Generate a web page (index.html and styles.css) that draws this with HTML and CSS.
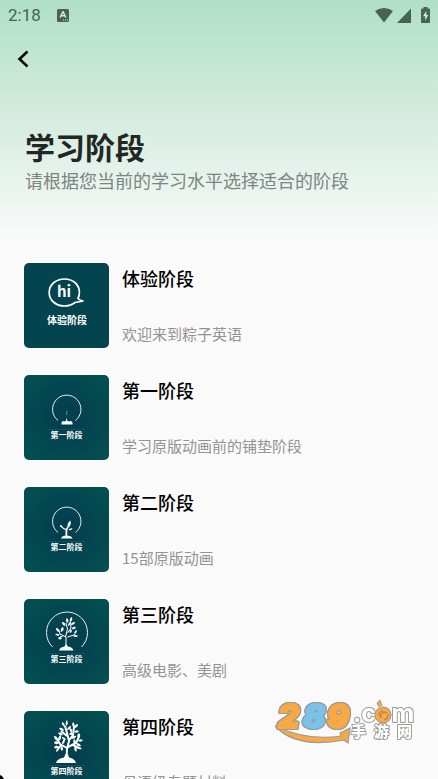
FILE: index.html
```html
<!DOCTYPE html>
<html lang="zh-CN">
<head>
<meta charset="utf-8">
<meta name="viewport" content="width=device-width, initial-scale=1">
<title>学习阶段</title>
<link rel="stylesheet" href="styles.css">
</head>
<body>
<header class="hero">
  <div class="status">
    <span class="time">2:18</span>
    <svg class="app-badge" width="12" height="13" viewBox="0 0 12 13" aria-hidden="true">
      <rect width="12" height="13" rx="1.5" fill="#466354"/>
      <path d="M3.2 8.5 5.7 3h.6l2.5 5.5M4.3 6.8h3.4" fill="none" stroke="#d8eee2" stroke-width="1.4"/>
      <path d="M6 11h1M8 11h1M10 11h1" stroke="#d8eee2"/>
    </svg>
    <span class="signals">
      <svg width="18" height="15" viewBox="0 0 18 15" aria-hidden="true"><path d="M0 3Q9-3 18 3L9 14.500Z" fill="#466354"/></svg>
      <svg width="14" height="15" viewBox="0 0 14 15" aria-hidden="true"><path d="M14 .5V15H0Z" fill="#466354"/></svg>
      <svg class="battery" width="9" height="16" viewBox="0 0 9 16" aria-hidden="true"><path d="M2.500 0h4v1.500H8q1 0 1 1V15q0 1-1 1H1q-1 0-1-1V2.500q0-1 1-1h1.500Z" fill="#466354"/><path d="M5.300 4 2 9.300h2.200V13.500L7.200 8H5.300Z" fill="#d8eee2"/></svg>
    </span>
  </div>
  <nav class="nav">
    <button class="back" type="button" aria-label="返回">
      <svg width="12" height="18" viewBox="0 0 12 18" aria-hidden="true"><path d="M10.500 1.500 2.500 9l8 7.500" fill="none" stroke="#000" stroke-width="2.500"/></svg>
    </button>
  </nav>
  <h1 class="title">学习阶段</h1>
  <p class="subtitle">请根据您当前的学习水平选择适合的阶段</p>
</header>

<main>
  <ul class="stages">
    <li>
      <a class="stage" href="#trial">
        <svg class="thumb thumb-flat" viewBox="0 0 85 85" aria-hidden="true">
          <path d="M54 35.500C55 33.500 55.400 31.500 55.400 29.500 55.400 21.500 49 16 40.500 16S25.200 21.500 25.200 29.500 32 43 40.500 43C44.500 43 48.500 41.500 51 39.500L59.500 38Q55.500 37.500 54 35.500Z" fill="none" stroke="#fff" stroke-width="1.700"/>
          <text class="hi" x="40" y="34">hi</text>
          <text class="cap cap-large" x="43" y="61">体验阶段</text>
        </svg>
        <div class="info"><h2>体验阶段</h2><p>欢迎来到粽子英语</p></div>
      </a>
    </li>
    <li>
      <a class="stage" href="#stage-1">
        <svg class="thumb" viewBox="0 0 85 85" aria-hidden="true">
          <path class="ring" d="M34 45.500A14.200 14.200 0 1 1 51.500 45.500"/>
          <path class="leaf" d="M37.500 49.500V47.500Q38.500 45 40.500 46.500L42.200 45.500 42.500 42.500 43.200 45.500 45 46.500Q47.500 45 48.500 47.500V49.500Z"/>
          <path d="M43.500 35.500Q41.500 37.500 43 40" stroke="#7797a0" stroke-width=".8" fill="none"/>
          <path class="rule" d="M24 54.500H61"/>
          <text class="cap" x="42.500" y="63">第一阶段</text>
        </svg>
        <div class="info"><h2>第一阶段</h2><p>学习原版动画前的铺垫阶段</p></div>
      </a>
    </li>
    <li>
      <a class="stage" href="#stage-2">
        <svg class="thumb" viewBox="0 0 85 85" aria-hidden="true">
          <path class="ring" d="M34 45.500A14.200 14.200 0 1 1 51.500 45.500"/>
          <path class="leaf" d="M37 51.500Q37.500 49 41.500 48.500V43Q39 42.500 37 40 35.500 40 36 38 38.500 38 38.700 40 40 41.500 42 41.700L43.500 39.500Q43.200 35.500 46.500 33.500 47.500 38.500 44.500 40.500L43.300 43V48.500Q48 49 48.500 51.500ZM44.500 43Q46.500 40.500 48.500 41.500 47.500 44 44.500 43Z"/>
          <path class="rule" d="M24 54.500H61"/>
          <text class="cap" x="42.500" y="63">第二阶段</text>
        </svg>
        <div class="info"><h2>第二阶段</h2><p>15部原版动画</p></div>
      </a>
    </li>
    <li>
      <a class="stage" href="#stage-3">
        <svg class="thumb" viewBox="0 0 85 85" aria-hidden="true">
          <path class="ring" d="M28.500 48A20.500 20.500 0 1 1 57.500 48"/>
          <path class="branch" d="M42 48V38L36 35 35 32M41.500 38 43.500 30 42 24M43.500 34 47 29 46.500 23M43.500 38 50 36 52 33M39 37l-3 1"/>
          <path class="leaf" d="M35 51.500Q36 48 40.500 47.500L42 45 44 47.500Q48.500 48 49.500 51.500ZM41 27q-3-1-3-4 3 0 3.500 3ZM43 24q-2-3 0-5 3 3 0 5ZM46 23q-1-4 2-5 1 4-2 5ZM47 26q0-3 4-3 0 3-4 3ZM44 27q0-3 2-4 1 3-2 4ZM36 33q-4 0-4-4 3 0 4 4ZM37 33q-1-4 2-5 2 3-2 5ZM36 36q-3 2-5-1 3-1 5 1ZM38 39q-2 3-4 0 2-2 4 0ZM48 30q0-3 4-2-1 3-4 2ZM50 34q1-3 3-3 0 3-3 3ZM49 37q3-2 5 0-2 2-5 0ZM46 34q-1-3 1-4 2 3-1 4Z"/>
          <path class="rule" d="M24 54.500H61"/>
          <text class="cap" x="42.500" y="63">第三阶段</text>
        </svg>
        <div class="info"><h2>第三阶段</h2><p>高级电影、美剧</p></div>
      </a>
    </li>
    <li>
      <a class="stage" href="#stage-4">
        <svg class="thumb" viewBox="0 0 85 85" aria-hidden="true">
          <path class="branch branch-thick" d="M42.500 49 43 37 36 33 33 28M43 38 45 30 43 22 41 15M44.500 30 49 24 50 16M44 36 52 32 55 26M38 34 34 37M49 34 55 37M43 25 37 20"/>
          <path class="leaf" d="M32 52Q33 47.500 40 46.500L41.500 43H44L45 46.500Q51 47.500 52 52ZM41 16q-4-2-3-5 3 1 3 5ZM42 15q-1-4 1-6 2 4-1 6ZM43 19q1-4 4-4 0 4-4 4ZM40 20q-4 0-5-3 4-1 5 3ZM39 24q-4 1-5-2 3-2 5 2ZM50 17q-3-3-1-6 3 3 1 6ZM50 17q1-4 4-4 0 4-4 4ZM50 21q2-3 5-1-1 3-5 1ZM48 22q-3-2-2-5 3 1 2 5ZM34 30q-4-1-4-5 4 0 4 5ZM34 30q0-5 3-6 1 5-3 6ZM35 32q-4 3-5-1 3-2 5 1ZM38 33q0-4 3-5 0 5-3 5ZM35 36q-4 3-5 0 3-3 5 0ZM36 36q-1 4-4 5 0-4 4-5ZM38 35q2 3 0 5-3-3 0-5ZM47 28q1-4 5-3 0 3-5 3ZM54 28q-2-4 1-6 3 3-1 6ZM54 30q2-3 5-1-2 3-5 1ZM52 32q4 0 5 3-4 1-5-3ZM51 33q-3-2-1-5 3 2 1 5ZM52 36q4-1 6 2-4 1-6-2ZM51 35q3 3 1 6-3-3-1-6ZM45 23q2-3 4 0-2 2-4 0ZM42 29q-4 0-4-3 3 0 4 3Z"/>
          <path class="rule" d="M24 54.500H61"/>
          <text class="cap" x="42.500" y="63">第四阶段</text>
        </svg>
        <div class="info"><h2>第四阶段</h2><p>母语级专题材料</p></div>
      </a>
    </li>
  </ul>
</main>

<svg class="watermark" width="144" height="46" viewBox="0 0 144 46" role="img" aria-label="289.com 手游网">
  <path d="M1 27Q32 42 67 37L66 34 76 29 74 44 70 41Q22 50 1 27Z" fill="#f8a943" stroke="#9a9a98" stroke-width="1.200"/>
  <g class="wm-digits"><text class="orange" x="4" y="29">2</text><text class="blue" x="29" y="29">8</text><text class="orange" x="53" y="29">9</text></g>
  <text class="wm-com" x="79" y="23">.com</text>
  <circle cx="109" cy="16" r="8" fill="#f8a943" stroke="#9a9a98"/>
  <path d="M105 8 103 4l3-3 2 6" fill="#f8a943" stroke="#9a9a98"/>
  <path d="M105 16a4 4 0 0 1 4-4M107 19a4 4 0 0 1 6-5M110 21a5 5 0 0 0 4-6" fill="none" stroke="#ab8350" stroke-width="1.200"/>
  <text class="wm-cn" x="77" y="38">手</text><text class="wm-cn" x="100" y="38">游</text><text class="wm-cn" x="123" y="38">网</text>
</svg>
<svg class="pointer" width="5" height="5" viewBox="0 0 5 5" aria-hidden="true"><path d="M0 1 2 2 4 5H0Z"/></svg>
</body>
</html>
```

FILE: styles.css
```css
* { box-sizing: border-box; }

html { scrollbar-width: none; }

body {
  margin: 0;
  background: #fafafa;
  color: #000;
  font-family: "Noto Sans CJK SC", sans-serif;
}

h1, h2, p, ul { margin: 0; padding: 0; }

.hero {
  height: 240px;
  background: linear-gradient(#b0dfc6, #fafafa);
}

.status {
  display: flex;
  align-items: center;
  height: 30px;
  padding: 0 8px;
  color: #466354;
}

.time {
  font: 400 17px/30px Roboto, sans-serif;
}

.app-badge { margin-left: 16px; }

.signals {
  display: flex;
  align-items: center;
  gap: 4px;
  margin-left: auto;
}

.battery { margin-left: 6px; }

.nav {
  display: flex;
  align-items: center;
  height: 58px;
  padding: 0 17px;
}

.back {
  display: flex;
  padding: 0;
  border: 0;
  background: none;
}

.title {
  padding: 36px 25px 0;
  color: #222724;
  font-size: 30px;
  font-weight: 700;
  line-height: 44px;
}

.subtitle {
  padding: 0 25px;
  color: #7c8580;
  font-size: 18px;
  font-weight: 400;
  line-height: 24px;
}

.stages {
  display: flex;
  flex-direction: column;
  gap: 27px;
  padding: 23px 24px;
  list-style: none;
}

.stage {
  display: flex;
  gap: 13px;
  color: inherit;
  text-decoration: none;
}

.thumb {
  flex: none;
  width: 85px;
  height: 85px;
  border-radius: 5px;
  background: radial-gradient(circle, #03404f 20%, #034e50 85%);
}

.thumb-flat { background: #03444f; }

.info {
  display: flex;
  flex: 1;
  flex-direction: column;
  justify-content: space-between;
  padding: 3px 0 4px;
}

.info h2 {
  font-size: 18px;
  font-weight: 500;
  line-height: 24px;
}

.info p {
  color: #939393;
  font-size: 15px;
  font-weight: 400;
  line-height: 20px;
}

.cap {
  fill: #fff;
  font-size: 8px;
  font-weight: 700;
  text-anchor: middle;
}

.cap-large { font-size: 10px; }

.hi {
  fill: #fff;
  font-size: 15px;
  font-weight: 700;
  text-anchor: middle;
}

.ring {
  fill: none;
  stroke: #e5eeee;
  stroke-width: 1;
}

.leaf { fill: #fff; }

.branch {
  fill: none;
  stroke: #fff;
  stroke-width: 1;
}

.branch-thick { stroke-width: 2; }

.rule {
  stroke: #134e59;
  stroke-width: 1;
}

.watermark {
  position: fixed;
  right: 20px;
  bottom: 34px;
  overflow: visible;
}

.watermark text {
  stroke: #9a9a98;
  stroke-width: 2px;
  stroke-linejoin: round;
  paint-order: stroke;
}

.wm-digits {
  font: italic 900 33px Inter, sans-serif;
  filter: drop-shadow(1px 0 #9a9a98) drop-shadow(-1px 0 #9a9a98) drop-shadow(0 1px #9a9a98) drop-shadow(0 -1px #9a9a98);
}

.watermark .orange {
  fill: #f8a943;
  stroke: #f8a943;
}

.watermark .blue {
  fill: #79c3ea;
  stroke: #79c3ea;
}

.wm-com {
  fill: #fff;
  font: 700 25px Inter, sans-serif;
}

.wm-cn {
  fill: #fff;
  font-size: 15px;
  font-weight: 900;
}

.pointer {
  position: fixed;
  bottom: 0;
  left: 0;
}
```
